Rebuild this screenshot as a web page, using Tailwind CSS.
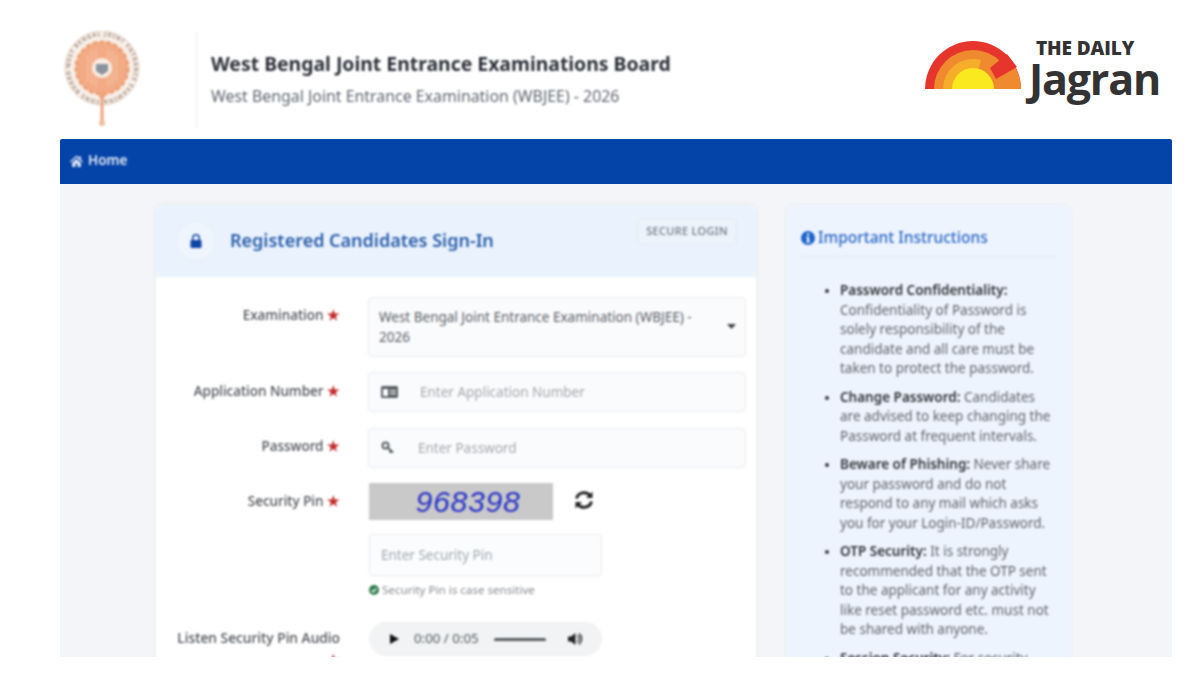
<!DOCTYPE html>
<html lang="en">
<head>
<meta charset="UTF-8">
<title>WBJEE 2026 Sign-In</title>
<script src="https://cdn.jsdelivr.net/npm/@tailwindcss/browser@4"></script>
</head>
<body class="bg-white font-['Noto_Sans','Open_Sans',sans-serif] overflow-hidden">
<div class="ml-[60px] w-[1112px] h-[657px] overflow-hidden flex flex-col">

  <!-- header -->
  <header class="h-[139px] shrink-0 flex items-start">
    <div class="flex items-start blur-[0.8px]">
      <svg class="w-[80px] h-[100px] mt-[31px] ml-[3px]" viewBox="0 0 80 100">
        <defs><path id="sealRing" d="M39 37 m-32 0 a32 32 0 1 1 64 0 a32 32 0 1 1 -64 0"/></defs>
        <circle cx="39" cy="37" r="37" fill="#f7efe8" stroke="#e2cfc0" stroke-width="1"/>
        <text font-size="5.600" font-weight="700" fill="#a08d80" font-family="Noto Sans, sans-serif" textLength="198"><textPath href="#sealRing">WEST BENGAL JOINT ENTRANCE EXAMINATIONS BOARD</textPath></text>
        <circle cx="39" cy="37" r="26" fill="#f2ab85" stroke="#ee9f74" stroke-width="3" stroke-dasharray="5 2"/>
        <path d="M25 24v26M29 20v34M33 18v38M45 18v38M49 20v34M53 24v26" stroke="#f6c4a6" stroke-width="1.200"/>
        <circle cx="39" cy="37" r="10" fill="#f7ece4"/>
        <path d="M33 33h12v7l-6 4-6-4z" fill="#8a939b"/>
        <path d="M36 63h6v2l-1.500 3v22h-3V68l-1.500-3z" fill="#f0a27a"/>
        <circle cx="39" cy="92" r="3" fill="#f1bb9e"/>
      </svg>
      <div class="w-px h-[96px] bg-[#eeeeee] mt-[32px] ml-[53px]"></div>
      <div class="ml-[14px] mt-[50px]">
        <h1 class="text-[19.400px] leading-[28px] font-bold text-[#2c3038]">West Bengal Joint Entrance Examinations Board</h1>
        <p class="text-[15.900px] leading-[22px] mt-[7px] text-[#5f6670]">West Bengal Joint Entrance Examination (WBJEE) - 2026</p>
      </div>
    </div>
    <div class="ml-auto mr-[12px] mt-[39px] flex items-start">
      <svg class="w-[96px] h-[50px] mt-[2px]" viewBox="0 0 96 50">
        <path d="M0 48A48 48 0 0 1 96 48Z" fill="#e5352d"/>
        <path d="M48 48L96 48A48 48 0 0 0 90 26Z" fill="#ef8a2e"/>
        <path d="M9 48A39 39 0 0 1 87 48Z" fill="#ef8a2e"/>
        <path d="M48 48L18 48A30 30 0 0 1 56 19Z" fill="#f6ae2a"/>
        <polygon points="65,27 82,13 92,26 71,38" fill="#e5352d"/>
        <path d="M27 48A21 21 0 0 1 69 48Z" fill="#fbe91f"/>
      </svg>
      <div class="ml-[8px] text-[#333333] font-['Open_Sans',sans-serif]">
        <div class="text-[19px] leading-[20px] font-extrabold tracking-[-0.1px] ml-[7px] mt-[-1px]">THE DAILY</div>
        <div class="text-[43px] leading-[42px] font-bold tracking-[-1.200px] mt-[0px]">Jagran</div>
      </div>
    </div>
  </header>

  <!-- nav -->
  <nav class="h-[45px] shrink-0 bg-[#0443a8] flex items-center pl-[10px] gap-[5px] text-white/90 text-[13.500px] font-semibold rounded-t-[2px] pb-[2px]">
    <svg class="w-[13px] h-[12px] blur-[0.8px]" viewBox="0 0 24 22" fill="#e6ecf6"><path d="M12 1L0 12l1.500 1.700L12 4.300l10.500 9.400L24 12l-4-3.700V2h-3v3.500zM4 14.500V22h6v-6h4v6h6v-7.500L12 7.300z"/></svg>
    <span class="blur-[0.8px]">Home</span>
  </nav>

  <!-- main -->
  <main class="flex-1 bg-[#f3f5f8] flex items-start pl-[96px] pt-[21px] gap-[30px] overflow-hidden">

    <section class="w-[600px] h-[500px] shrink-0 bg-white rounded-[6px] shadow-[0_0_6px_rgba(0,0,0,0.06)] overflow-hidden blur-[0.8px]">
      <div class="h-[72px] bg-[#eaf3fd] flex items-center pl-[20px] pr-[19px]">
        <div class="w-[40px] h-[40px] rounded-full bg-[#eff5fd] border border-[#e6eef9] flex items-center justify-center">
          <svg class="w-[12px] h-[14px]" viewBox="0 0 12 14" fill="#0f46a5"><path d="M3.500 6V4a2.500 2.500 0 0 1 5 0v2h1.500V4a4 4 0 0 0-8 0v2z"/><rect x="0.500" y="6" width="11" height="8" rx="1"/></svg>
        </div>
        <h2 class="ml-[14px] text-[18px] font-semibold text-[#2a5da9] mt-[-2px]">Registered Candidates Sign-In</h2>
        <span class="ml-auto mt-[-20px] h-[27px] w-[100px] border border-[#e2e8f0] bg-[#edf3fb] rounded-[4px] text-[11px] tracking-[0.3px] text-[#6d7683] font-medium flex items-center justify-center">SECURE LOGIN</span>
      </div>

      <form class="pt-[20px] pr-[10px] text-[13.500px]">
        <div class="flex mb-[15px]">
          <label class="w-[184px] text-right font-medium text-[#4b4f55] pt-[7px] leading-[22px]">Examination <span class="text-[#c22a2a] text-[13.500px] font-bold">★</span></label>
          <div class="ml-[28px] flex-1 h-[60px] bg-[#fafbfc] border border-[#e9ebee] rounded-[4px] pl-[10px] pr-[10px] pt-[9px] text-[#5c6269] leading-[20px] relative">
            <div class="w-[330px]">West Bengal Joint Entrance Examination (WBJEE) - 2026</div>
            <svg class="absolute right-[9px] top-[26px] w-[9px] h-[5px]" viewBox="0 0 9 5" fill="#3f4246"><path d="M0 0h9L4.500 5z"/></svg>
          </div>
        </div>

        <div class="flex mb-[16px]">
          <label class="w-[184px] text-right font-medium text-[#4b4f55] pt-[8px] leading-[22px]">Application Number <span class="text-[#c22a2a] text-[13.500px] font-bold">★</span></label>
          <div class="ml-[28px] flex-1 h-[40px] bg-[#fafbfc] border border-[#e9ebee] rounded-[4px] flex items-center pl-[12px]">
            <svg class="w-[17px] h-[12px] shrink-0" viewBox="0 0 17 12" fill="#5b6065"><path d="M0 1.500A1.500 1.500 0 0 1 1.500 0h14A1.500 1.500 0 0 1 17 1.500v9a1.500 1.500 0 0 1-1.500 1.500h-14A1.500 1.500 0 0 1 0 10.500zM2 3v7h5V3zm7 1v1.200h6V4zm0 3v1.200h6V7z"/></svg>
            <input class="ml-[22px] flex-1 bg-transparent outline-none placeholder:text-[#a4a8ae]" placeholder="Enter Application Number">
          </div>
        </div>

        <div class="flex mb-[15px]">
          <label class="w-[184px] text-right font-medium text-[#4b4f55] pt-[7px] leading-[22px]">Password <span class="text-[#c22a2a] text-[13.500px] font-bold">★</span></label>
          <div class="ml-[28px] flex-1 h-[40px] bg-[#fafbfc] border border-[#e9ebee] rounded-[4px] flex items-center pl-[12px]">
            <svg class="w-[14px] h-[14px] shrink-0" viewBox="0 0 14 14" fill="none" stroke="#5b6065" stroke-width="2"><circle cx="4.500" cy="4.500" r="3"/><path d="M6.500 6.500L12 11.500M10 9.500l-1.500 2"/></svg>
            <input class="ml-[23px] flex-1 bg-transparent outline-none placeholder:text-[#a4a8ae]" placeholder="Enter Password">
          </div>
        </div>

        <div class="flex">
          <label class="w-[184px] text-right font-medium text-[#4b4f55] pt-[7px] leading-[22px]">Security Pin <span class="text-[#c22a2a] text-[13.500px] font-bold">★</span></label>
          <div class="ml-[29px]">
            <div class="flex items-center">
              <div class="w-[184px] h-[37px] bg-[#c9c9c9] flex items-center justify-center pl-[14px] font-['Liberation_Sans',sans-serif] italic text-[30px] tracking-[0.8px] text-[#2a35c8]">968398</div>
              <svg class="w-[20px] h-[20px] ml-[21px] mb-[3px]" viewBox="0 0 20 20" fill="none" stroke="#222222" stroke-width="3"><path d="M2.500 8.500A7.800 7.800 0 0 1 16 5.500M17.500 11.500A7.800 7.800 0 0 1 4 14.500"/><path d="M18.500 1.500v6.500h-6.500z" fill="#222222" stroke="none"/><path d="M1.500 18.500v-6.500h6.500z" fill="#222222" stroke="none"/></svg>
            </div>
            <input class="mt-[14px] block w-[233px] h-[42px] bg-[#fafcfe] border border-[#e9ebee] rounded-[3px] px-[11px] outline-none placeholder:text-[#a4a8ae]" placeholder="Enter Security Pin">
            <div class="mt-[6px] flex items-center gap-[3px] text-[11.600px] leading-[16px] text-[#858a90]">
              <svg class="w-[10px] h-[10px]" viewBox="0 0 10 10"><circle cx="5" cy="5" r="5" fill="#2f7d4f"/><path d="M2.600 5.200l1.700 1.600 3.100-3.300" stroke="#ffffff" stroke-width="1.300" fill="none"/></svg>
              Security Pin is case sensitive
            </div>
          </div>
        </div>

        <div class="flex mt-[24px]">
          <label class="w-[184px] pl-[14px] text-right font-medium text-[13.800px] text-[#4b4f55] pt-[5px] leading-[22px]">Listen Security Pin Audio <span class="text-[#c22a2a] text-[13.500px] font-bold">★</span></label>
          <div class="ml-[29px] w-[233px] h-[34px] rounded-full bg-[#f1f3f4] flex items-center pl-[21px] text-[13.300px] text-[#55595e]">
            <svg class="w-[9px] h-[10px]" viewBox="0 0 9 10" fill="#111111"><path d="M0 0l9 5-9 5z"/></svg>
            <span class="ml-[15px]">0:00 / 0:05</span>
            <div class="ml-[15px] w-[52px] h-[3px] rounded-full bg-[#5b5e62]"></div>
            <svg class="w-[15px] h-[14px] ml-[22px]" viewBox="0 0 15 14" fill="#222222"><path d="M0 4.500h3L7.500 1v12L3 9.500H0z"/><path d="M9.500 3.500a4.500 4.500 0 0 1 0 7M11 1.500a7 7 0 0 1 0 11" stroke="#222222" stroke-width="1.300" fill="none"/></svg>
          </div>
        </div>
      </form>
    </section>

    <aside class="w-[285px] h-[500px] shrink-0 bg-[#eef4fd] rounded-[8px] shadow-[0_0_4px_rgba(0,0,0,0.05)] px-[15px] overflow-hidden blur-[0.8px]">
      <h3 class="h-[52px] flex items-center gap-[3px] border-b border-[#e3e9f2] pt-[14px] text-[15.500px] font-medium text-[#2a68c4]">
        <svg class="w-[14px] h-[14px] shrink-0" viewBox="0 0 14 14"><circle cx="7" cy="7" r="7" fill="#1b63c9"/><rect x="6" y="2.500" width="2.200" height="2.200" fill="#ffffff"/><path d="M5 6h3.200v4.500H9.300v1H5v-1h1.100V7H5z" fill="#ffffff"/></svg>
        Important Instructions
      </h3>
      <ul class="mt-[24px] pl-[39px] text-[13.500px] leading-[19.500px] text-[#5f646b] list-disc marker:text-[#33373d] marker:text-[11px]">
        <li class="mb-[9px]"><b class="font-semibold text-[#30343a]">Password Confidentiality:</b><br>Confidentiality of Password is solely responsibility of the candidate and all care must be taken to protect the password.</li>
        <li class="mb-[9px]"><b class="font-semibold text-[#30343a]">Change Password:</b> Candidates are advised to keep changing the Password at frequent intervals.</li>
        <li class="mb-[9px]"><b class="font-semibold text-[#30343a]">Beware of Phishing:</b> Never share your password and do not respond to any mail which asks you for your Login-ID/Password.</li>
        <li class="mb-[9px]"><b class="font-semibold text-[#30343a]">OTP Security:</b> It is strongly recommended that the OTP sent to the applicant for any activity like reset password etc. must not be shared with anyone.</li>
        <li><b class="font-semibold text-[#30343a]">Session Security:</b> For security</li>
      </ul>
    </aside>
  </main>
</div>
</body>
</html>
